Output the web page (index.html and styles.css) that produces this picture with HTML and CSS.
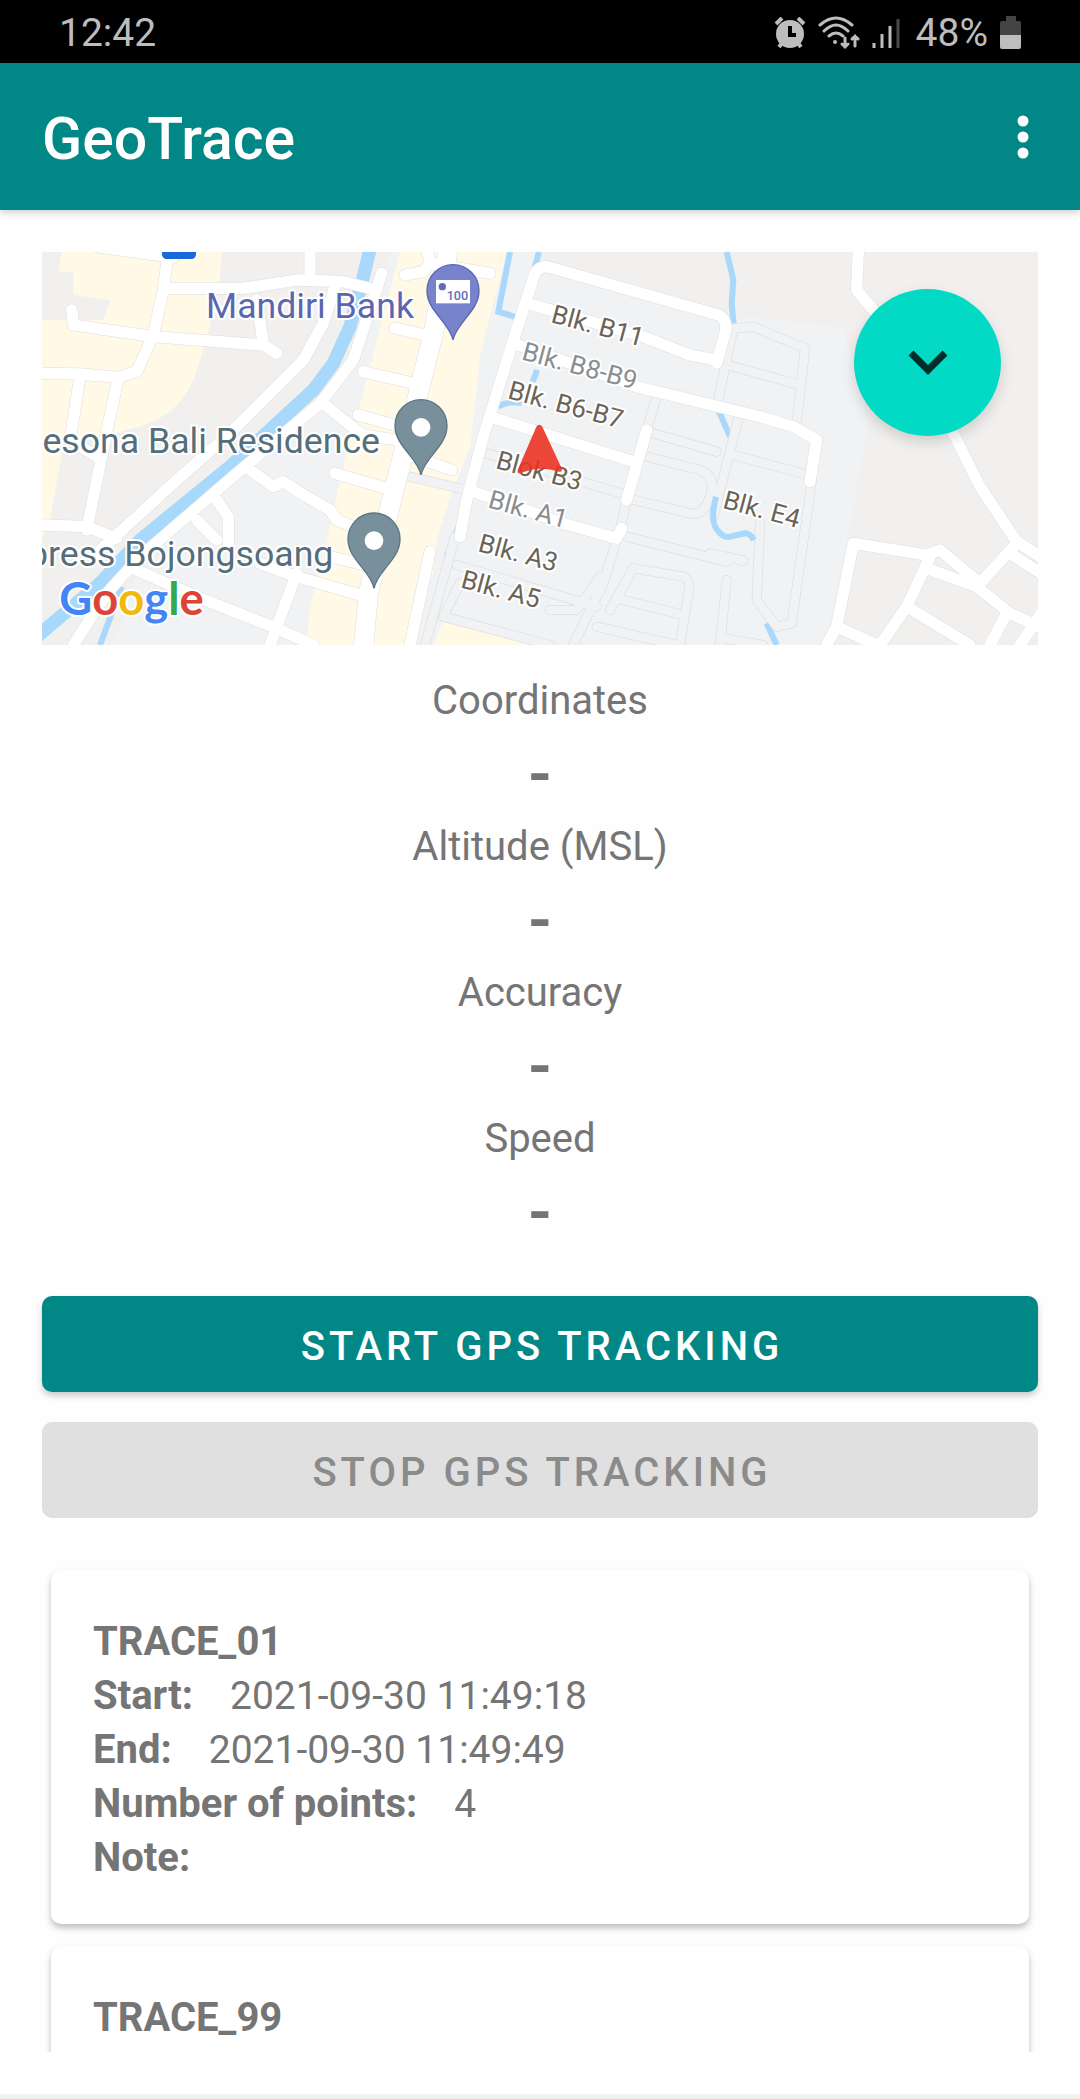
FILE: index.html
```html
<!DOCTYPE html>
<html lang="en">
  <head>
    <meta charset="utf-8">
    <title>GeoTrace</title>
    <link rel="stylesheet" href="styles.css">
  </head>

  <body>
    <div class="statusbar">
      <span>12:42</span>
      <div class="status-icons">
        <svg width="32" height="32" viewBox="0 0 32 32">
          <circle cx="16" cy="17" r="14" fill="#bdbdbd" />
          <path d="M2 7l6-6M30 7l-6-6M5 30l4-5M27 30l-4-5" stroke="#bdbdbd" stroke-width="4" />
          <path d="M16 9v9h6" fill="none" stroke="#000" stroke-width="4" />
        </svg>
        <svg class="wifi" width="42" height="34" viewBox="0 0 42 34">
          <g fill="none" stroke="#bdbdbd" stroke-width="3" stroke-linecap="round">
            <path d="M2 9Q18-5 34 9M6 15Q18 3 30 15M11 20Q18 14 25 20" />
            <path d="M27 22v9M24 28l3 3 3-3M37 30v-10M34 23l3-3 3 3" />
          </g>
          <circle cx="17" cy="26" r="2" fill="#bdbdbd" />
        </svg>
        <svg width="28" height="32" viewBox="0 0 28 32">
          <path d="M2 26v5M10 17v14M18 9v22" stroke="#bdbdbd" stroke-width="3" />
          <path d="M26 2v29" stroke="#4a4a4a" stroke-width="3" />
        </svg>
        <span>48%</span>
        <svg class="battery" width="22" height="34" viewBox="0 0 22 34">
          <path d="M6 0h10v5h3q2 0 2 2v12H0V7q0-2 2-2h4z" fill="#444" />
          <path d="M0 19h21v12q0 2-2 2H2q-2 0-2-2z" fill="#bdbdbd" />
        </svg>
      </div>
    </div>

    <header class="toolbar">
      <h1>GeoTrace</h1>
      <button class="menu" type="button" aria-label="More options">
        <svg width="12" height="44" viewBox="0 0 12 44">
          <g fill="#fff">
            <circle cx="6" cy="6" r="5.5" />
            <circle cx="6" cy="22" r="5.5" />
            <circle cx="6" cy="38" r="5.5" />
          </g>
        </svg>
      </button>
    </header>

    <main>
      <div class="map">
        <svg class="map-canvas" viewBox="36 36 2988 1179" preserveAspectRatio="xMidYMid slice">
          <defs>
            <g id="lanes">
              <path d="M1880 470L1850 570M1790 780L1770 870M1760 900L1720 1030L1630 1215M1140 710L1310 750M1275 890L1185 1215" />
              <path d="M1370 640L1790 765M1870 580L2060 635M1850 650L2010 690Q2060 710 2040 770Q2020 830 1980 820L1790 775M1790 890L2090 965" />
              <path d="M1280 975L1700 1100M1290 1030L1240 1130L1560 1215M1710 1010L1640 1110L1560 1110" />
              <path d="M1740 1110L1810 985L1960 1010Q1985 1020 1975 1060L1950 1215M1760 1075L1960 1125M1700 1160L1940 1215" />
              <path d="M2060 500L2110 265L2170 260L2325 325L2300 550M2075 370L2310 435M2125 535L2050 830M2110 645L2335 705" />
              <path d="M2345 725L2285 1150L2240 1160L2180 1080L2190 850M2040 940L2140 962M2090 1020L2070 1215M2080 1195L2200 1215" />
            </g>
            <g id="streets">
              <path d="M200 20L430 52M415 36L400 150L370 285L320 395L265 412L225 600L170 870" />
              <path d="M36 400L150 402L265 412M150 410L120 600L200 650M125 210L130 255L370 290L700 315L740 340" />
              <path d="M410 145L640 145L800 120L940 125L1040 150M840 36V100M680 180L700 310" />
              <path d="M915 140L880 250L820 360L600 580L430 730L200 940M1055 100L970 360L870 490L620 700L330 950L230 1060L130 1215" />
              <path d="M36 855L170 860L260 895M320 990L500 1070L740 1165L850 1215M800 1000L720 1215M690 970L800 1010L990 1065" />
              <path d="M660 690L730 740L760 725L830 770L900 810L920 840L970 860M560 780L595 830V910M500 840L560 900" />
              <path d="M880 490L940 540L1000 585L1100 600M1000 395L1150 430M985 525L1110 560M915 700L1070 745M900 950L1030 980" />
              <path d="M1125 105L1180 95L1200 70L1380 100M1190 30L1200 65M1095 265L1210 290M1150 650L1265 690M1200 935L1140 1215" />
              <path d="M1290 890L1310 780L1360 590L1450 300L1515 100Q1530 75 1560 82L2065 225Q2095 240 2085 280L2060 370" />
              <path d="M1490 190L1580 215L1840 290L1980 345L2060 360M1450 310L1820 440L1900 460L2190 530L2290 560L2360 600L2340 725" />
              <path d="M1395 535L1810 665M1850 570L1790 780M1330 755L1600 850L1760 895L1775 865" />
              <path d="M2485 36L2480 150L2530 210L2770 580L2850 740L2960 905L3040 955M2390 1215L2420 1160L2470 910L2690 945L2730 930L2850 1030L2960 910" />
              <path d="M2700 950L2630 1100L2550 1215M2690 985L2840 1040L2940 1120L3040 1165M2630 1100L2820 1215M2420 1160L2540 1215M2930 1120L2880 1215M2940 940L3040 1005M3040 1110L2970 1215" />
            </g>
            <path id="avenue" d="M1255 20L1235 150L1210 280L1150 520L1080 800L1015 1060L1000 1230" />
            <path id="pin" d="M0 148C-10 95-78 62-78 0A78 78 0 0 1 78 0C78 62 10 95 0 148Z" />
          </defs>

          <rect class="land" x="36" y="36" width="2988" height="1179" />
          <path class="housing" d="M1080 36H1530L1500 70L2060 220L2440 262L2515 540L2455 900L2400 1215H250L330 960L880 480L1000 300Z" />
          <path class="commerce" d="M95 36H575L570 110L530 300L490 420Q440 540 290 570L100 620L60 840L36 900V240H220L240 180L130 165V95H85Z" />
          <path class="commerce" d="M1110 36H1430L1400 150L1350 350L1320 620L1265 760L1220 900L1210 1000L1120 1215H830L840 1100L890 900L930 720L1020 380Z" />
          <path class="commerce" d="M1240 1140L1540 1215H1210Z" />

          <g class="water">
            <path class="river" d="M1022 20L1000 110L960 260L910 370L850 450L600 680L330 900L210 1030L20 1190" />
            <path d="M275 1040L210 1215M1440 36L1405 215L1470 235M1527 36L1512 90M1522 390L1508 425M1405 500Q1440 480 1475 490M1290 850L1250 950" />
            <path d="M2090 36L2110 120L2105 190L2112 260L2095 340M2065 510L2100 590M2210 1150L2240 1215" />
          </g>

          <use class="lane-edge" href="#lanes" />
          <use class="lane" href="#lanes" />
          <path class="water" d="M2058 770Q2040 840 2060 868T2100 890L2145 880Q2160 880 2172 900" />
          <use class="street-edge" href="#streets" />
          <use class="avenue-edge" href="#avenue" />
          <use class="street" href="#streets" />
          <use class="avenue" href="#avenue" />

          <rect x="396" y="0" width="102" height="57" rx="14" fill="#1a67d8" />

          <g transform="translate(1269 152)">
            <use href="#pin" fill="#7784cc" stroke="#5965b5" stroke-width="4" />
            <rect x="-51" y="-32" width="102" height="70" fill="#fff" />
            <circle cx="-32" cy="-12" r="11" fill="#5f6cbb" />
            <text class="atm" x="-19" y="28">100</text>
          </g>
          <g transform="translate(1173 557)">
            <use href="#pin" fill="#78909c" stroke="#5b7480" stroke-width="4" />
            <circle cy="5" r="28" fill="#fff" />
          </g>
          <g transform="translate(1032 897)">
            <use href="#pin" fill="#78909c" stroke="#5b7480" stroke-width="4" />
            <circle cy="5" r="28" fill="#fff" />
          </g>

          <g class="place">
            <text class="bank" x="528" y="235">Mandiri Bank</text>
            <text x="1050" y="640" text-anchor="end">esona Bali Residence</text>
            <text x="910" y="978" text-anchor="end">press Bojongsoang</text>
          </g>
          <g class="block">
            <text transform="translate(1560 246) rotate(15)">Blk. B11</text>
            <text class="faded" transform="translate(1472 358) rotate(15)">Blk. B8-B9</text>
            <text transform="translate(1430 474) rotate(15)">Blk. B6-B7</text>
            <text transform="translate(1394 684) rotate(15)">Blok B3</text>
            <text class="faded" transform="translate(1371 802) rotate(15)">Blk. A1</text>
            <text transform="translate(1341 933) rotate(15)">Blk. A3</text>
            <text transform="translate(1289 1042) rotate(15)">Blk. A5</text>
            <text transform="translate(2075 803) rotate(15)">Blk. E4</text>
          </g>
          <path d="M1519 560Q1528 548 1537 560L1595 685Q1598 698 1586 695Q1528 675 1472 700Q1460 702 1463 690Z" fill="#ea3323" opacity=".9" />
          <text class="google" x="88" y="1124"><tspan class="g-blue">G</tspan><tspan class="g-red">o</tspan><tspan class="g-yellow">o</tspan><tspan class="g-blue">g</tspan><tspan class="g-green">l</tspan><tspan class="g-red">e</tspan></text>
        </svg>

        <button class="fab" type="button" aria-label="Collapse details">
          <svg width="40" height="26" viewBox="0 0 40 26">
            <path d="M3 3l17 17L37 3" fill="none" stroke="#022f2c" stroke-width="7" />
          </svg>
        </button>
      </div>

      <dl class="readings">
        <dt>Coordinates</dt>
        <dd>-</dd>
        <dt>Altitude (MSL)</dt>
        <dd>-</dd>
        <dt>Accuracy</dt>
        <dd>-</dd>
        <dt>Speed</dt>
        <dd>-</dd>
      </dl>

      <div class="actions">
        <button class="btn" type="button">START GPS TRACKING</button>
        <button class="btn" type="button" disabled>STOP GPS TRACKING</button>
      </div>

      <div class="traces">
        <article class="card">
          <h2>TRACE_01</h2>
          <dl>
            <div class="row"><dt>Start:</dt><dd>2021-09-30 11:49:18</dd></div>
            <div class="row"><dt>End:</dt><dd>2021-09-30 11:49:49</dd></div>
            <div class="row"><dt>Number of points:</dt><dd>4</dd></div>
            <div class="row"><dt>Note:</dt><dd></dd></div>
          </dl>
        </article>
        <article class="card">
          <h2>TRACE_99</h2>
        </article>
      </div>
    </main>

    <footer class="navbar"></footer>
  </body>
</html>
```

FILE: styles.css
```css
* {
  box-sizing: border-box;
}
body {
  margin: 0;
  height: 100vh;
  display: flex;
  flex-direction: column;
  background: #fefefe;
  color: #757575;
  font-family: Roboto, "Liberation Sans", sans-serif;
  font-size: 40px;
  line-height: 54px;
}
h1, h2, dl, dd {
  margin: 0;
}
button {
  border: 0;
  padding: 0;
  font: inherit;
  cursor: pointer;
}
svg {
  display: block;
}

/* system bar */
.statusbar {
  flex: none;
  height: 63px;
  padding: 3px 58px 0 59px;
  display: flex;
  align-items: center;
  justify-content: space-between;
  background: #000;
  color: #bdbdbd;
  font-size: 39px;
}
.status-icons {
  display: flex;
  align-items: center;
  gap: 12px;
}
.status-icons span {
  margin-left: 4px;
}

/* app bar */
.toolbar {
  flex: none;
  height: 147px;
  padding: 4px 42px 0;
  display: flex;
  align-items: center;
  justify-content: space-between;
  background: #018786;
  color: #fff;
  box-shadow: 0 2px 8px rgba(0, 0, 0, 0.2);
}
.toolbar h1 {
  font-size: 59px;
  font-weight: 500;
  line-height: 72px;
}
.menu {
  padding: 0 9px 4px;
  background: none;
}

main {
  flex: 1;
  min-height: 0;
  padding: 42px;
  display: flex;
  flex-direction: column;
}

/* map */
.map {
  position: relative;
  flex: none;
}
.map-canvas {
  width: 100%;
  height: 393px;
}
.land {
  fill: #f1f0ef;
}
.housing {
  fill: #f0f2f4;
}
.commerce {
  fill: #fff9e6;
}
.water {
  fill: none;
  stroke: #a8d8fb;
  stroke-width: 18;
}
.river {
  stroke-width: 40;
}
.lane, .lane-edge, .street, .street-edge, .avenue, .avenue-edge {
  fill: none;
  stroke-linecap: round;
  stroke-linejoin: round;
}
.lane {
  stroke: #f0f2f4;
  stroke-width: 26;
}
.lane-edge {
  stroke: #dcdee0;
  stroke-width: 30;
}
.street {
  stroke: #fff;
  stroke-width: 34;
}
.street-edge {
  stroke: #dedede;
  stroke-width: 37;
}
.avenue {
  stroke: #fff;
  stroke-width: 58;
}
.avenue-edge {
  stroke: #dedede;
  stroke-width: 61;
}
.place, .block, .google {
  stroke: #fff;
  stroke-width: 12;
  stroke-linejoin: round;
  paint-order: stroke;
}
.place {
  font-size: 107px;
  fill: #546e7a;
}
.bank {
  fill: #5c66b0;
}
.block {
  font-size: 78px;
  fill: #6b6456;
}
.faded {
  fill: #8b8d90;
}
.atm {
  font-size: 38px;
  font-weight: 500;
  fill: #5f6cbb;
}
.google {
  font-family: Lato, Roboto, sans-serif;
  font-size: 136px;
  font-weight: bold;
}
.g-blue {
  fill: #4285f4;
}
.g-red {
  fill: #db4437;
}
.g-yellow {
  fill: #f0b90b;
}
.g-green {
  fill: #34a853;
}
.fab {
  position: absolute;
  top: 37px;
  right: 37px;
  width: 147px;
  height: 147px;
  display: flex;
  align-items: center;
  justify-content: center;
  border-radius: 50%;
  background: #03dac5;
  box-shadow: 0 6px 14px rgba(0, 0, 0, 0.15);
}

/* current gps readings */
.readings {
  flex: none;
  margin-top: 29px;
  text-align: center;
}
.readings dd {
  font-size: 62px;
  font-weight: bold;
  line-height: 92px;
}

.actions {
  flex: none;
  margin-top: 38px;
  display: flex;
  flex-direction: column;
  gap: 30px;
}
.btn {
  height: 96px;
  padding: 5px 0 0 4px;
  border-radius: 10px;
  background: #018786;
  color: #fff;
  font-weight: 500;
  letter-spacing: 4px;
  box-shadow: 0 4px 6px rgba(0, 0, 0, 0.2);
}
.btn:disabled {
  background: #e0e0e0;
  color: #8b8b8b;
  box-shadow: none;
  cursor: default;
}

/* saved traces */
.traces {
  flex: 1;
  min-height: 0;
  margin-top: 32px;
  padding: 20px 9px 0;
  display: flex;
  flex-direction: column;
  gap: 22px;
  overflow: hidden;
}
.card {
  flex: none;
  min-height: 354px;
  padding: 45px 42px 39px;
  border-radius: 10px;
  background: #fff;
  box-shadow: 0 4px 6px rgba(0, 0, 0, 0.25);
}
.card h2 {
  font-size: 40px;
  font-weight: bold;
}
.row {
  display: flex;
  gap: 37px;
}
.row dt {
  font-weight: bold;
}
.row dd {
  font-size: 39px;
}

.navbar {
  flex: none;
  height: 5px;
  background: #f1f1f1;
}
```
